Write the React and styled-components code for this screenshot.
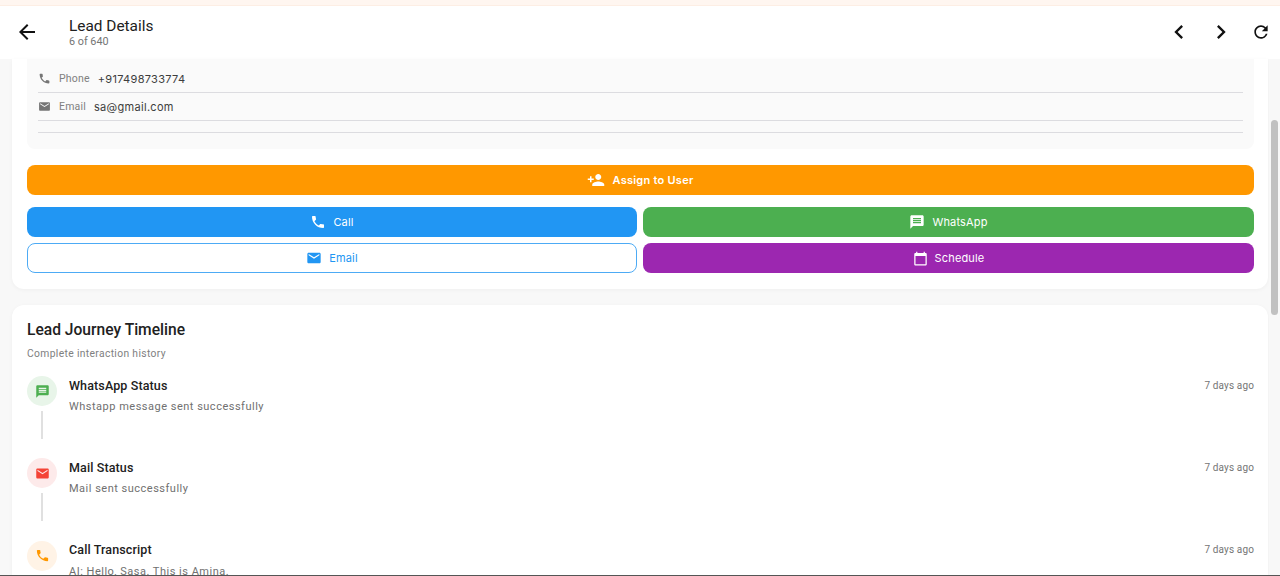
import React from "react";
import styled, { createGlobalStyle } from "styled-components";
import {
  MdArrowBack, MdChevronLeft, MdChevronRight, MdRefresh, MdPhone, MdEmail,
  MdPersonAdd, MdMessage, MdCalendarToday,
} from "react-icons/md";

const Global = createGlobalStyle`
  html, body { margin: 0; padding: 0; height: 100%; overflow: hidden; background: #f8f8f8; }
  * { box-sizing: border-box; }
  body { font-family: Roboto, "Liberation Sans", sans-serif; }
`;

const Shell = styled.div`
  position: relative;
  width: 1280px;
  height: 576px;
  display: flex;
  flex-direction: column;
  overflow: hidden;
  background: #f8f8f8;
`;
const TopStrip = styled.div`
  height: 6px;
  flex: none;
  background: #fff6f0;
  border-bottom: 1px solid #fdeee4;
`;
const Header = styled.header`
  height: 53px;
  flex: none;
  background: #fff;
  display: flex;
  align-items: center;
  padding: 0 0 2px 15px;
  color: #111;
`;
const TitleBlock = styled.div`
  margin-left: 30px;
  flex: 1;
  display: flex;
  flex-direction: column;
  padding-top: 1px;
`;
const Title = styled.div`
  font-size: 15.4px;
  line-height: 20px;
  color: #212121;
`;
const Sub = styled.div`
  font-size: 10.8px;
  line-height: 12px;
  color: #757575;
`;
const HeaderIcon = styled.span`
  display: flex;
  align-items: center;
  justify-content: center;
  width: ${(p) => p.$w || 42}px;
`;
const Content = styled.main`
  flex: 1;
  display: flex;
  flex-direction: column;
  gap: 16px;
  padding: 0 12px;
  min-height: 0;
`;
const Card = styled.section`
  background: #fff;
  border-radius: ${(p) => (p.$top ? "0 0 12px 12px" : "12px")};
  box-shadow: 0 1px 4px rgba(0, 0, 0, 0.04);
  padding: ${(p) => (p.$top ? "0 14px 16px 15px" : "15px 14px 0 15px")};
  flex: none;
`;
const InfoPanel = styled.div`
  background: #fafafa;
  border-radius: 0 0 8px 8px;
  padding: 6px 11px 16px;
  margin-bottom: 16px;
`;
const InfoRow = styled.div`
  height: ${(p) => p.$h || 28}px;
  border-bottom: 1.5px solid #dcdce0;
  display: flex;
  align-items: center;
  gap: 8px;
  color: #757575;
`;
const InfoLabel = styled.span`
  font-size: 10.5px;
  letter-spacing: 0.2px;
  color: #808080;
`;
const InfoValue = styled.span`
  font-family: Inter, sans-serif;
  font-size: 11px;
  letter-spacing: 0.3px;
  color: #3d3d3d;
`;
const ActionButton = styled.div`
  height: 30px;
  border-radius: 8px;
  display: flex;
  align-items: center;
  justify-content: center;
  gap: 7px;
  font-family: Inter, sans-serif;
  font-size: 11px;
  letter-spacing: ${(p) => (p.$strong ? "0.25px" : "0.15px")};
  font-weight: ${(p) => (p.$strong ? 600 : 400)};
  background: ${(p) => p.$bg || "#fff"};
  color: ${(p) => p.$fg || "#fff"};
  border: ${(p) => (p.$outline ? "1.5px solid #4dabf5" : "none")};
`;
const AssignWrap = styled.div`
  margin-bottom: 12px;
`;
const ButtonGrid = styled.div`
  display: grid;
  grid-template-columns: 610px 611px;
  gap: 6px;
`;
const CardTitle = styled.h2`
  margin: 0;
  font-size: 15.6px;
  line-height: 20px;
  font-weight: 500;
  color: #212121;
`;
const CardSub = styled.p`
  margin: 7px 0 15px;
  font-size: 10.3px;
  line-height: 14px;
  letter-spacing: 0.35px;
  color: #808080;
`;
const Item = styled.div`
  display: flex;
  height: 82.3px;
`;
const Rail = styled.div`
  width: 30px;
  flex: none;
  display: flex;
  flex-direction: column;
  align-items: center;
`;
const Dot = styled.div`
  width: 30px;
  height: 30px;
  border-radius: 50%;
  flex: none;
  display: flex;
  align-items: center;
  justify-content: center;
  background: ${(p) => p.$bg};
  color: ${(p) => p.$fg};
`;
const Connector = styled.div`
  width: 2px;
  height: 28px;
  margin-top: 5px;
  background: #e0e0e0;
`;
const ItemBody = styled.div`
  flex: 1;
  margin-left: 12px;
  min-width: 0;
`;
const ItemHead = styled.div`
  display: flex;
  justify-content: space-between;
  align-items: center;
  height: 18px;
`;
const ItemTitle = styled.div`
  font-size: 12.5px;
  letter-spacing: 0.12px;
  font-weight: 500;
  color: #212121;
`;
const ItemTime = styled.div`
  font-size: 10px;
  letter-spacing: 0.13px;
  color: #757575;
`;
const ItemText = styled.div`
  margin-top: 5px;
  font-size: 11px;
  line-height: 15px;
  letter-spacing: 0.5px;
  color: #707070;
`;
const ScrollTrack = styled.div`
  position: absolute;
  top: 59px;
  right: 0;
  bottom: 0;
  width: 11px;
  background: #f8f8f8;
`;
const ScrollThumb = styled.div`
  position: absolute;
  top: 61px;
  left: 2px;
  width: 7px;
  height: 195px;
  border-radius: 4px;
  background: #c1c1c1;
`;
const BottomLine = styled.div`
  position: absolute;
  left: 0;
  right: 0;
  bottom: 0;
  height: 1px;
  background: #555;
`;

const events = [
  { t: "WhatsApp Status", d: "Whstapp message sent successfully", I: MdMessage, bg: "#e8f5e9", fg: "#4caf50" },
  { t: "Mail Status", d: "Mail sent successfully", I: MdEmail, bg: "#fdeaea", fg: "#f44336" },
  { t: "Call Transcript", d: "AI: Hello, Sasa. This is Amina.", I: MdPhone, bg: "#fff3e6", fg: "#ff9800" },
];

export default function App() {
  return (
    <Shell>
      <Global />
      <TopStrip />
      <Header>
        <HeaderIcon $w={24}><MdArrowBack size={24} /></HeaderIcon>
        <TitleBlock>
          <Title>Lead Details</Title>
          <Sub>6 of 640</Sub>
        </TitleBlock>
        <HeaderIcon><MdChevronLeft size={28} /></HeaderIcon>
        <HeaderIcon><MdChevronRight size={28} /></HeaderIcon>
        <HeaderIcon $w={38}><MdRefresh size={20} /></HeaderIcon>
      </Header>
      <Content>
        <Card $top>
          <InfoPanel>
            <InfoRow>
              <MdPhone size={13} />
              <InfoLabel>Phone</InfoLabel>
              <InfoValue>+917498733774</InfoValue>
            </InfoRow>
            <InfoRow>
              <MdEmail size={13} />
              <InfoLabel>Email</InfoLabel>
              <InfoValue>sa@gmail.com</InfoValue>
            </InfoRow>
            <InfoRow $h={12} />
          </InfoPanel>
          <AssignWrap>
            <ActionButton $bg="#ff9800" $strong><MdPersonAdd size={18} />Assign to User</ActionButton>
          </AssignWrap>
          <ButtonGrid>
            <ActionButton $bg="#2196f3"><MdPhone size={16} />Call</ActionButton>
            <ActionButton $bg="#4caf50"><MdMessage size={16} />WhatsApp</ActionButton>
            <ActionButton $outline $fg="#2196f3"><MdEmail size={16} />Email</ActionButton>
            <ActionButton $bg="#9c27b0"><MdCalendarToday size={15} />Schedule</ActionButton>
          </ButtonGrid>
        </Card>
        <Card>
          <CardTitle>Lead Journey Timeline</CardTitle>
          <CardSub>Complete interaction history</CardSub>
          {events.map(({ t, d, I, bg, fg }, i) => (
            <Item key={t}>
              <Rail>
                <Dot $bg={bg} $fg={fg}><I size={15} /></Dot>
                {i < 2 && <Connector />}
              </Rail>
              <ItemBody>
                <ItemHead>
                  <ItemTitle>{t}</ItemTitle>
                  <ItemTime>7 days ago</ItemTime>
                </ItemHead>
                <ItemText>{d}</ItemText>
              </ItemBody>
            </Item>
          ))}
        </Card>
      </Content>
      <ScrollTrack><ScrollThumb /></ScrollTrack>
      <BottomLine />
    </Shell>
  );
}
